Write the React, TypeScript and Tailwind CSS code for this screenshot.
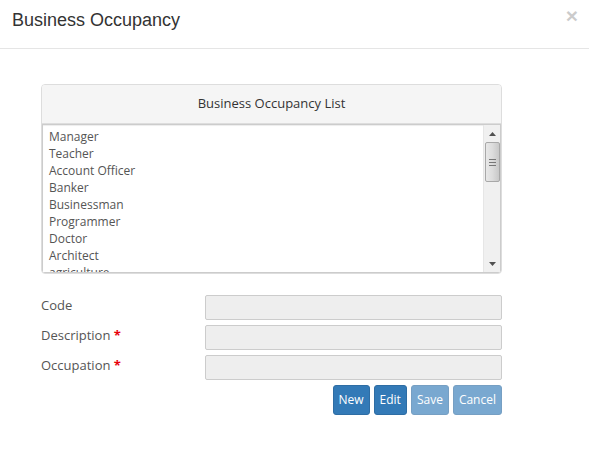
import React from 'react';

const occupations = ['Manager', 'Teacher', 'Account Officer', 'Banker', 'Businessman', 'Programmer', 'Doctor', 'Architect', 'agriculture'];

const fields = [
  { label: 'Code', required: false },
  { label: 'Description', required: true },
  { label: 'Occupation', required: true },
];

const ScrollBar: React.FC = () => (
  <div className="w-[17px] shrink-0 bg-[#f0f0f0] border-l border-[#e6e6e6] flex flex-col items-center">
    <div className="h-[17px] w-full flex items-center justify-center">
      <svg width="7" height="4" viewBox="0 0 7 4"><path d="M3.5 0L7 4H0z" fill="#505050" /></svg>
    </div>
    <div className="w-[15px] h-[40px] rounded-[2px] border border-[#a8a8a8] bg-gradient-to-r from-[#e8e8e8] via-[#dcdcdc] to-[#c8c8c8] flex flex-col items-center justify-center gap-[2px]">
      <div className="w-[7px] h-px bg-[#777]" />
      <div className="w-[7px] h-px bg-[#777]" />
      <div className="w-[7px] h-px bg-[#777]" />
    </div>
    <div className="flex-1" />
    <div className="h-[17px] w-full flex items-center justify-center">
      <svg width="7" height="4" viewBox="0 0 7 4"><path d="M0 0H7L3.5 4z" fill="#505050" /></svg>
    </div>
  </div>
);

const App: React.FC = () => {
  return (
    <div className="w-[589px] h-[468px] bg-white font-['Open_Sans',sans-serif] text-[#333]">
      <div className="h-[49px] border-b border-[#e5e5e5] flex items-start justify-between pl-[12px] pr-[11px]">
        <h4 className="font-['Liberation_Sans',Arial,sans-serif] text-[18px] leading-[20px] mt-[10px] text-[#333]">Business Occupancy</h4>
        <button className="font-['Liberation_Sans',Arial,sans-serif] font-bold text-[21px] leading-none text-black opacity-20 mt-[5px]">×</button>
      </div>

      <div className="ml-[41px] w-[461px] mt-[35px]">
        <div className="border border-[#ddd] rounded-[4px] overflow-hidden">
          <div className="h-[39px] bg-[#f5f5f5] border-b border-[#ddd] flex items-center justify-center text-[13px]">
            Business Occupancy List
          </div>
          <div className="h-[149px] flex border border-[#ccc] shadow-[inset_0_1px_1px_rgba(0,0,0,0.075)] bg-white">
            <div className="flex-1 overflow-hidden pl-[6px] pt-[3px] text-[12px] leading-[17px] text-[#555]">
              {occupations.map((o) => (
                <div key={o}>{o}</div>
              ))}
            </div>
            <ScrollBar />
          </div>
        </div>

        <div className="mt-[21px] flex flex-col gap-[5px]">
          {fields.map((f) => (
            <div key={f.label} className="flex items-start h-[25px]">
              <label className="w-[164px] pt-[2px] text-[13px] leading-[17px] text-[#555]">
                {f.label}
                {f.required && <span className="text-red-600 font-bold"> *</span>}
              </label>
              <input disabled className="flex-1 h-[25px] bg-[#eee] border border-[#ccc] rounded-[2px]" />
            </div>
          ))}
          <div className="flex justify-end gap-[4px]">
            <button className="h-[30px] px-[5px] rounded-[3px] bg-[#337ab7] border border-[#2e6da4] text-white text-[12px]">New</button>
            <button className="h-[30px] px-[5px] rounded-[3px] bg-[#337ab7] border border-[#2e6da4] text-white text-[12px]">Edit</button>
            <button className="h-[30px] px-[5px] rounded-[3px] bg-[#337ab7] border border-[#2e6da4] text-white text-[12px] opacity-65">Save</button>
            <button className="h-[30px] px-[5px] rounded-[3px] bg-[#337ab7] border border-[#2e6da4] text-white text-[12px] opacity-65">Cancel</button>
          </div>
        </div>
      </div>
    </div>
  );
};

export default App;
